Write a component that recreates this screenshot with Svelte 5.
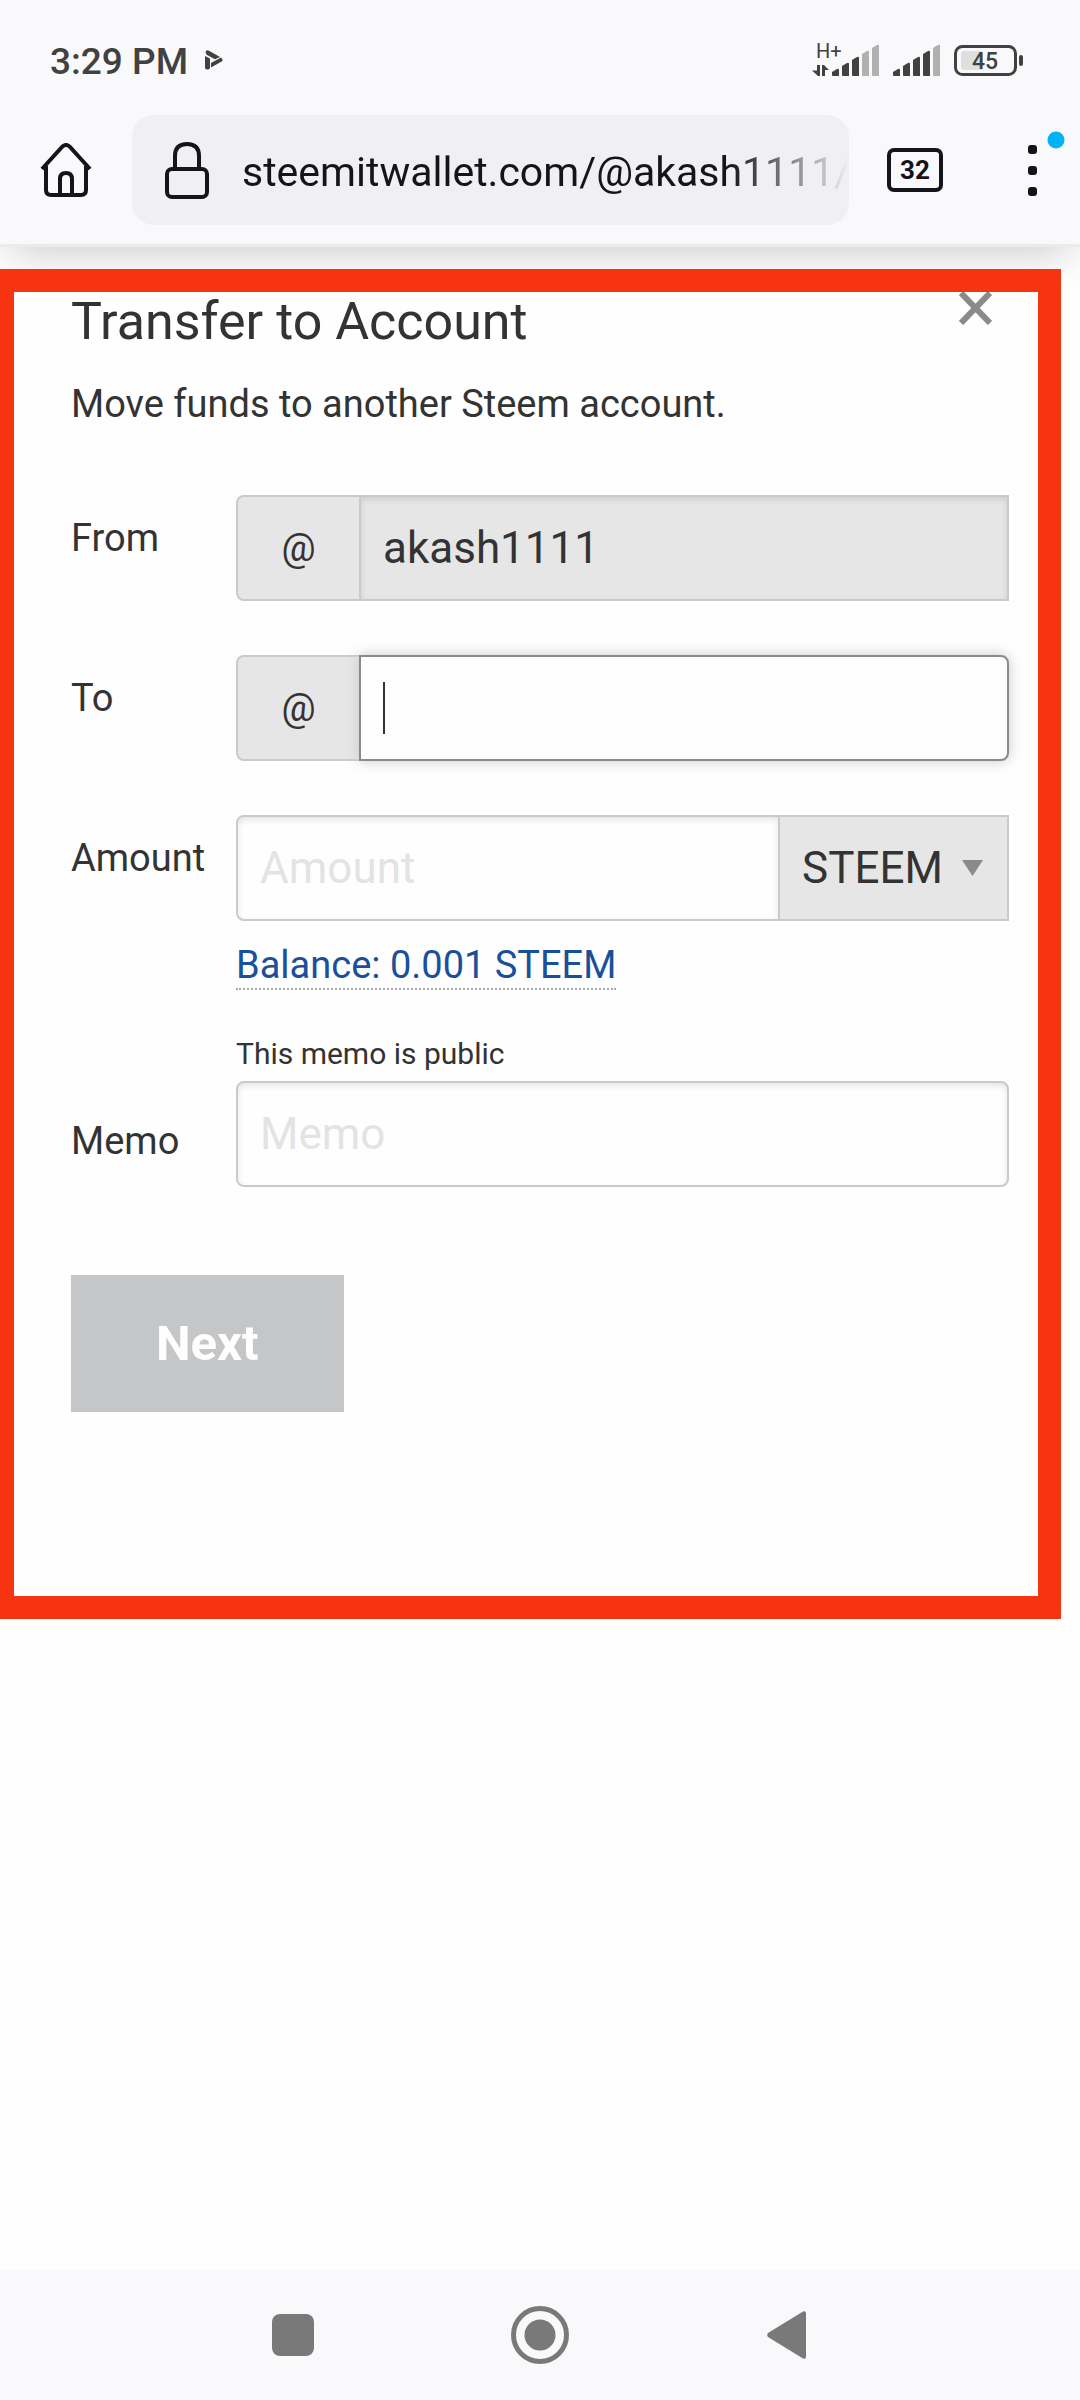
<script lang="ts">
  type Signal = { id: string; level: number; network?: string };

  const signals: Signal[] = [
    { id: "sim1", level: 3, network: "H+" },
    { id: "sim2", level: 4 },
  ];
  const tabCount = 32;
  const battery = 45;

  let from = $state("akash1111");
  let to = $state("");
  let amount = $state("");
  let asset = $state("STEEM");
  let memo = $state("");

  const ready = $derived(to.trim() !== "" && Number(amount) > 0);

  function bar(i: number) {
    const x = i * 10;
    const top = 24 - i * 6;
    return `M${x} ${top + 3}L${x + 5} ${top}Q${x + 7} ${top - 1} ${x + 7} ${top + 1}V31H${x + 1}Q${x} 31 ${x} 30Z`;
  }

  function useBalance(e: MouseEvent) {
    e.preventDefault();
    amount = "0.001";
  }
</script>

<div class="screen">
  <header class="chrome">
    <div class="status">
      <span class="time">3:29 PM</span>
      <svg class="play" width="18" height="20" viewBox="0 0 18 20" aria-hidden="true">
        <path d="M1 1Q2-.3 4 .8L15 7L10 9.300L2 5Q0 3.500 1 1Z" />
        <path d="M0 6L5 8.500V18Q4 20 2 19.500Q0 19.500 0 17.500Z" />
        <path d="M6 13L16 7.500Q18 9 17.500 11L6 17.500Z" />
      </svg>

      <div class="indicators">
        {#each signals as signal (signal.id)}
          {#if signal.network}
            <svg width="68" height="36" viewBox="0 0 68 36" role="img" aria-label="Mobile signal">
              <text class="network" x="4" y="18">{signal.network}</text>
              <path class="on" d="M5 25H8V36H6L0 30.500H5ZM10 25H12L17 30H13V36H10Z" />
              <g transform="translate(20 5)">
                {#each [0, 1, 2, 3, 4] as i}
                  <path class={i < signal.level ? "on" : "off"} d={bar(i)} />
                {/each}
              </g>
            </svg>
          {:else}
            <svg width="48" height="36" viewBox="0 0 48 36" role="img" aria-label="Mobile signal">
              <g transform="translate(0 5)">
                {#each [0, 1, 2, 3, 4] as i}
                  <path class={i < signal.level ? "on" : "off"} d={bar(i)} />
                {/each}
              </g>
            </svg>
          {/if}
        {/each}
        <svg width="69" height="31" viewBox="0 0 69 31" role="img" aria-label="Battery">
          <rect x="7" y="6" width="22" height="19" rx="3" fill="#dfdfdf" />
          <rect x="1.500" y="1.500" width="60" height="28" rx="7" fill="none" stroke="#414141" stroke-width="3" />
          <rect class="on" x="65" y="10" width="4" height="11" rx="2" />
          <text class="charge" x="31" y="24">{battery}</text>
        </svg>
      </div>
    </div>

    <div class="toolbar">
      <button type="button" class="icon" aria-label="Home">
        <svg width="52" height="54" viewBox="0 0 52 54">
          <path d="M2 26L22.500 3.500Q26 .5 29.500 3.500L50 26M6 23V47Q6 52 11 52H41Q46 52 46 47V23M20 52V36Q20 30 26 30Q32 30 32 36V52" />
        </svg>
      </button>

      <div class="address">
        <svg width="44" height="57" viewBox="0 0 44 57" aria-hidden="true">
          <rect x="2" y="27" width="40" height="28" rx="5" />
          <path d="M10 27V14Q10 2 22 2Q34 2 34 14V27" />
        </svg>
        <span class="url">steemitwallet.com/@akash1111/</span>
      </div>

      <button type="button" class="tabs" aria-label="Open tabs">{tabCount}</button>

      <button type="button" class="icon menu" aria-label="Menu">
        <svg width="38" height="66" viewBox="0 10 38 66">
          <rect class="dot" x="0" y="18" width="9" height="9" rx="3" />
          <rect class="dot" x="0" y="39" width="9" height="9" rx="3" />
          <rect class="dot" x="0" y="60" width="9" height="9" rx="3" />
          <circle class="notice" cx="28" cy="13" r="8.500" />
        </svg>
      </button>
    </div>
  </header>

  <main>
    <section class="dialog">
      <div class="heading">
        <h1>Transfer to Account</h1>
        <button type="button" class="icon close" aria-label="Close">
          <svg width="33" height="33" viewBox="0 0 33 33">
            <path d="M2 1L31 31M31 1L2 31" />
          </svg>
        </button>
      </div>
      <p class="intro">Move funds to another Steem account.</p>

      <form onsubmit={(e) => e.preventDefault()}>
        <div class="row">
          <label for="from">From</label>
          <div class="group">
            <span class="prefix">@</span>
            <input id="from" class="field locked" type="text" bind:value={from} readonly />
          </div>
        </div>

        <div class="row">
          <label for="to">To</label>
          <div class="group">
            <span class="prefix">@</span>
            <input id="to" class="field active" type="text" bind:value={to} autocomplete="off" />
            {#if to === ""}
              <span class="caret"></span>
            {/if}
          </div>
        </div>

        <div class="row">
          <label for="amount">Amount</label>
          <div>
            <div class="group">
              <input id="amount" class="field first" type="text" placeholder="Amount" bind:value={amount} />
              <select class="asset" aria-label="Asset" bind:value={asset}>
                <option>STEEM</option>
                <option>SBD</option>
              </select>
              <svg class="arrow" width="21" height="16" viewBox="0 0 21 16" aria-hidden="true">
                <path d="M0 0H21L10.500 16Z" />
              </svg>
            </div>
            <a class="balance" href="#balance" onclick={useBalance}>Balance: 0.001 STEEM</a>
          </div>
        </div>

        <div class="row">
          <label class="low" for="memo">Memo</label>
          <div>
            <small>This memo is public</small>
            <div class="group">
              <input id="memo" class="field first last" type="text" placeholder="Memo" bind:value={memo} />
            </div>
          </div>
        </div>

        <button type="submit" class="next" disabled={!ready}>Next</button>
      </form>
    </section>
  </main>

  <nav class="system" aria-label="System">
    <button type="button" class="icon" aria-label="Recent apps">
      <svg width="42" height="42" viewBox="0 0 42 42"><rect width="42" height="42" rx="8" /></svg>
    </button>
    <button type="button" class="icon" aria-label="Home screen">
      <svg width="58" height="58" viewBox="0 0 58 58">
        <circle class="ring" cx="29" cy="29" r="26.500" />
        <circle cx="29" cy="29" r="15.500" />
      </svg>
    </button>
    <button type="button" class="icon" aria-label="Back">
      <svg width="40" height="48" viewBox="0 0 40 48">
        <path d="M1 22L36 .5Q39-.5 39 2V46Q39 48.500 36 47.500L1 26Q-.5 24 1 22Z" />
      </svg>
    </button>
  </nav>
</div>

<style>
  :global(body) {
    margin: 0;
    background: #fefefe;
  }

  .screen {
    display: flex;
    flex-direction: column;
    min-height: 100vh;
    font-family: Roboto, "Liberation Sans", sans-serif;
    color: #333;
  }
  .screen * {
    box-sizing: border-box;
  }
  svg {
    display: block;
    flex: none;
  }
  button,
  input,
  select {
    margin: 0;
    font-family: inherit;
    color: inherit;
  }
  .icon {
    display: flex;
    flex: none;
    padding: 0;
    border: 0;
    background: none;
  }

  /* browser chrome */
  .chrome {
    background: #f9f9fb;
    border-bottom: 3px solid #ebebeb;
    box-shadow: 0 16px 40px -10px rgba(0, 0, 0, 0.2);
  }
  .status {
    display: flex;
    align-items: center;
    height: 115px;
    padding: 8px 57px 0 50px;
    color: #414141;
  }
  .time {
    font-size: 37px;
    font-weight: 500;
    line-height: 44px;
  }
  .play {
    margin: 0 0 4px 17px;
    fill: #414141;
  }
  .indicators {
    display: flex;
    align-items: flex-end;
    gap: 13px;
    margin: 0 0 8px auto;
  }
  .on {
    fill: #414141;
  }
  .off {
    fill: #b0b0b0;
  }
  .network {
    font-size: 20px;
    fill: #414141;
  }
  .charge {
    font-size: 23px;
    font-weight: 500;
    text-anchor: middle;
    fill: #414141;
  }

  .toolbar {
    display: flex;
    align-items: center;
    padding: 0 14px 19px 40px;
    color: #15141a;
  }
  .toolbar svg {
    fill: none;
    stroke: #15141a;
    stroke-width: 4;
  }
  .address {
    display: flex;
    flex: 1;
    align-items: center;
    gap: 33px;
    min-width: 0;
    height: 110px;
    margin: 0 38px 0 40px;
    padding-left: 33px;
    border-radius: 22px;
    background: #f0eff4;
  }
  .url {
    flex: 1;
    min-width: 0;
    padding-top: 4px;
    overflow: hidden;
    white-space: nowrap;
    font-size: 41px;
    line-height: 52px;
    mask-image: linear-gradient(to left, transparent, #000 120px);
  }
  .tabs {
    flex: none;
    width: 56px;
    height: 44px;
    padding: 0;
    border: 4px solid #15141a;
    border-radius: 7px;
    background: none;
    font-size: 26px;
    font-weight: 700;
    line-height: 36px;
  }
  .menu {
    margin-left: 85px;
  }
  .menu svg {
    stroke: none;
    overflow: visible;
  }
  .menu .dot {
    fill: #15141a;
  }
  .menu .notice {
    fill: #00b3f4;
  }

  /* transfer dialog */
  main {
    flex: 1;
    padding: 22px 19px 22px 0;
  }
  .dialog {
    padding: 0 29px 184px 57px;
    border: 23px solid #f73411;
    border-left-width: 14px;
  }
  .heading {
    display: flex;
    align-items: flex-start;
    justify-content: space-between;
    padding-right: 17px;
  }
  h1 {
    margin: 0 0 24px;
    font-size: 52px;
    font-weight: 400;
    line-height: 60px;
  }
  .close svg {
    fill: none;
    stroke: #8a8a8a;
    stroke-width: 6;
  }
  .intro {
    margin: 0 0 62px;
    font-size: 38px;
    line-height: 57px;
  }

  .row {
    display: grid;
    grid-template-columns: 165px minmax(0, 1fr);
    margin-bottom: 54px;
  }
  label {
    padding-top: 15px;
    font-size: 38px;
    line-height: 57px;
  }
  .low {
    align-self: end;
    padding: 0 0 17px;
  }
  .group {
    position: relative;
    display: flex;
    height: 106px;
  }
  .prefix {
    display: flex;
    flex: none;
    align-items: center;
    justify-content: center;
    width: 123px;
    border: 2px solid #cacaca;
    border-right: 0;
    border-radius: 8px 0 0 8px;
    background: #e6e6e6;
    font-size: 38px;
  }
  .field {
    flex: 1;
    min-width: 0;
    padding: 0 22px;
    border: 2px solid #cacaca;
    border-radius: 0;
    outline: 0;
    background: #fefefe;
    box-shadow: inset 0 3px 6px rgba(10, 10, 10, 0.1);
    font-size: 44px;
  }
  .field::placeholder {
    color: #e3e3e3;
    opacity: 1;
  }
  .locked {
    background: #e6e6e6;
  }
  .active {
    border-color: #8a8a8a;
    border-radius: 0 8px 8px 0;
    box-shadow: 0 0 14px #cacaca;
    caret-color: transparent;
  }
  .first {
    border-radius: 8px 0 0 8px;
  }
  .last {
    border-radius: 8px;
  }
  .caret {
    position: absolute;
    top: 27px;
    left: 147px;
    width: 2px;
    height: 52px;
    background: #333;
  }
  .asset {
    flex: none;
    width: 229px;
    padding: 0 22px;
    border: 2px solid #cacaca;
    border-left: 0;
    border-radius: 0;
    appearance: none;
    background: #e6e6e6;
    font-size: 44px;
  }
  .arrow {
    position: absolute;
    top: 45px;
    right: 26px;
    fill: #8a8a8a;
    pointer-events: none;
  }
  .balance {
    display: block;
    width: fit-content;
    margin-top: 21px;
    border-bottom: 2px dotted #a9a9a9;
    color: #1a5099;
    font-size: 38px;
    line-height: 46px;
    text-decoration: none;
  }
  small {
    display: block;
    margin-bottom: 17px;
    font-size: 30px;
    line-height: 20px;
  }
  .next {
    height: 137px;
    margin-top: 34px;
    padding: 0 85px;
    border: 0;
    background: #c5c6c8;
    color: #fefefe;
    font-size: 49px;
    font-weight: 700;
  }

  /* android buttons */
  .system {
    display: grid;
    grid-template-columns: repeat(3, 1fr);
    align-items: center;
    justify-items: center;
    height: 130px;
    padding: 0 170px;
    background: #f9f9fb;
  }
  .system svg {
    fill: #797979;
  }
  .system .ring {
    fill: none;
    stroke: #797979;
    stroke-width: 5;
  }
</style>
